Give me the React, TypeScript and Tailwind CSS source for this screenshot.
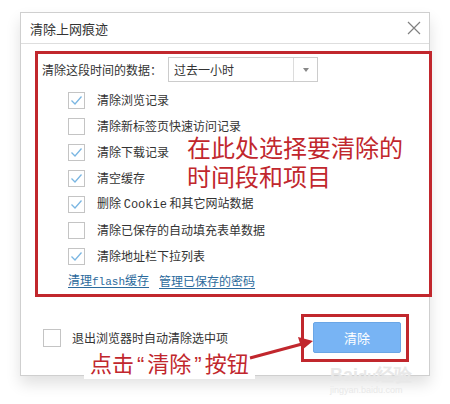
import React from "react";

const rows: { label: React.ReactNode; checked: boolean }[] = [
  { label: "清除浏览记录", checked: true },
  { label: "清除新标签页快速访问记录", checked: false },
  { label: "清除下载记录", checked: true },
  { label: "清空缓存", checked: true },
  {
    label: (
      <>
        删除 <span className="font-['Liberation_Mono',monospace] text-[12px]">Cookie</span> 和其它网站数据
      </>
    ),
    checked: true,
  },
  { label: "清除已保存的自动填充表单数据", checked: false },
  { label: "清除地址栏下拉列表", checked: true },
];

function Checkbox({ checked }: { checked: boolean }) {
  return (
    <div className="w-[17px] h-[17px] border border-[#c4c4c4] bg-white flex items-center justify-center shrink-0">
      {checked && (
        <svg width="13" height="11" viewBox="0 0 13 11" fill="none">
          <path d="M1.5 5.5 L5 9 L11.5 1.5" stroke="#7ab6e2" strokeWidth="1.3" />
        </svg>
      )}
    </div>
  );
}

export default function App() {
  return (
    <div className="w-[450px] h-[404px] bg-white relative overflow-hidden text-[#333] font-['Noto_Sans_CJK_SC','Noto_Sans',sans-serif]">
      {/* dialog */}
      <div className="ml-[20px] mt-[12px] w-[410px] h-[364px] border border-[#cfcfcf] bg-white shadow-[0_8px_14px_rgba(0,0,0,0.12)] flex flex-col">
        {/* title bar */}
        <div className="h-[31px] border-b border-[#dedede] flex items-center justify-between pl-[9px] pr-[8px] shrink-0">
          <span className="text-[13px] leading-none">清除上网痕迹</span>
          <svg width="14" height="14" viewBox="0 0 14 14">
            <path d="M1 1 L13 13 M13 1 L1 13" stroke="#808080" strokeWidth="1.2" />
          </svg>
        </div>

        {/* options, boxed by the red annotation frame */}
        <div className="pl-[14px] pt-[7px]">
          <div className="w-[397px] h-[246px] border-[3px] border-[#c1272d] flex flex-col text-[12px]">
            <div className="flex items-center mt-[3px] pl-[4px] h-[25px]">
              <span className="w-[126px]">清除这段时间的数据：</span>
              <div className="w-[150px] h-[25px] border border-[#cccccc] flex items-center">
                <span className="flex-1 pl-[5px]">过去一小时</span>
                <div className="w-[24px] h-full border-l border-[#dcdcdc] flex items-center justify-center">
                  <div className="w-0 h-0 border-l-[3px] border-r-[3px] border-t-[4px] border-l-transparent border-r-transparent border-t-[#888]" />
                </div>
              </div>
            </div>
            <div className="flex flex-col pl-[30px] mt-[5px]">
              {rows.map((r, i) => (
                <div key={i} className="h-[26px] flex items-center gap-[12px]">
                  <Checkbox checked={r.checked} />
                  <span>{r.label}</span>
                </div>
              ))}
              <div className="flex items-center gap-[10px] h-[24px] text-[#2b6a9c]">
                <span className="underline underline-offset-2">
                  清理<span className="font-['Liberation_Mono',monospace] text-[11px]">flash</span>缓存
                </span>
                <span className="underline underline-offset-2">管理已保存的密码</span>
              </div>
            </div>
          </div>
        </div>

        {/* bottom row */}
        <div className="flex items-center justify-between pl-[22px] pr-[28px] mt-[25px] h-[31px]">
          <div className="flex items-center gap-[11px] text-[12px]">
            <div className="w-[18px] h-[18px] border border-[#c4c4c4]" />
            <span>退出浏览器时自动清除选中项</span>
          </div>
          <div className="relative">
            <div className="w-[88px] h-[31px] rounded-[2px] bg-[#78b4f4] border border-[#6aa6e6] text-white text-[13px] flex items-center justify-center">
              清除
            </div>
            <div className="absolute -left-[12px] -top-[8px] -right-[8px] -bottom-[9px] border-[3px] border-[#c1272d]" />
          </div>
        </div>
      </div>

      {/* annotation text inside the red frame */}
      <div className="absolute left-[187px] top-[135px] text-[24px] leading-[24px] text-[#c1272d]">
        <div>在此处选择要清除的</div>
        <div className="mt-[5px]">时间段和项目</div>
      </div>

      {/* bottom annotation */}
      <div className="absolute left-[84px] top-[348px] px-[6px] bg-white text-[22px] leading-[28px] text-[#c1272d]">
        点击<span className="font-['Liberation_Sans',sans-serif] px-[3px]">“</span>清除<span className="font-['Liberation_Sans',sans-serif] px-[3px]">”</span>按钮
      </div>
      <svg className="absolute left-0 top-0" width="450" height="404" viewBox="0 0 450 404">
        <line x1="250" y1="358" x2="302" y2="344" stroke="#c1272d" strokeWidth="3" />
        <path d="M313 341 L298 337 L302 350 Z" fill="#c1272d" />
      </svg>

      {/* faint watermark */}
      <div className="absolute left-[330px] top-[366px] text-[#e8e8e8] leading-none">
        <div className="text-[18px] font-bold font-['Liberation_Sans',sans-serif]">Bai<span className="text-[15px]">du</span>经验</div>
        <div className="text-[9px] mt-[2px] font-['Liberation_Sans',sans-serif]">jingyan.baidu.com</div>
      </div>
    </div>
  );
}
